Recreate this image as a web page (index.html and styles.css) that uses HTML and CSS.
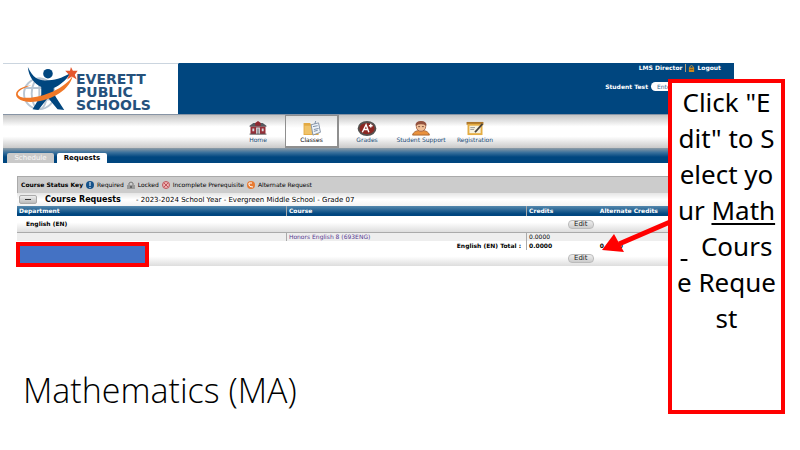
FILE: index.html
```html
<!DOCTYPE html>
<html lang="en">
<head>
<meta charset="utf-8">
<title>Mathematics (MA)</title>
<link rel="stylesheet" href="styles.css">
</head>
<body>
<main class="slide">
  <section class="app">
    <header class="banner">
      <div class="brand">
        <svg class="brand-mark" viewBox="0 0 64 48" aria-hidden="true">
          <g fill="none" stroke="#b9c6d3" stroke-width="2">
            <circle cx="24" cy="29" r="16"/>
            <ellipse cx="24" cy="29" rx="8" ry="16"/>
            <path d="M9 23h28M9 35h30M24 13v32"/>
          </g>
          <circle cx="33" cy="8" r="5" fill="#00467f"/>
          <path d="M12 1C17 12 23 15 30 15C40 15 47 13 57 7C51 16 45 20 39 23L39 29L50 46L43 45L33 33L23 46L17 45L26 30L26 22C18 18 13 11 12 1Z" fill="#00467f"/>
          <path d="M16 20C3 24-2 29 4 32C17 37 50 26 59 10C53 35 12 43 2 34C-5 27 5 21 16 20Z" fill="#f07828"/>
          <path d="M57 1L59 5L64 5L61 9L63 14L58 11L53 14L55 9L51 5L56 5Z" fill="#e4572e"/>
        </svg>
        <div class="brand-name"><span>EVERETT</span><span>PUBLIC</span><span>SCHOOLS</span></div>
      </div>
      <div class="account">
        <div class="account-links">
          <span>LMS Director</span>
          <a class="logout" href="#"><svg class="lock" viewBox="0 0 8 8" aria-hidden="true"><path d="M2 4V2Q4-1 6 2V4" fill="none" stroke="#d99a32"/><path d="M1 3h6v5H1z" fill="#c88820"/><path d="M2 5h4" stroke="#73500f"/></svg>Logout</a>
        </div>
        <div class="student"><label for="student">Student Test</label><input id="student" class="student-box" type="text" value="Enter"></div>
      </div>
    </header>

    <nav class="toolbar">
      <a class="tool" href="#">
        <svg class="tool-icon" viewBox="0 0 20 16" aria-hidden="true"><path d="M1 5L5 2H15L19 5V6H1Z" fill="#555a60"/><path d="M7 2L10 0L13 2V5H7Z" fill="#8f2830"/><path d="M2 6h16v8H2z" fill="#963039"/><path d="M4 8h2v3H4zM14 8h2v3h-2zM8 7h4v7H8z" fill="#d9dde2"/><path d="M10 8v6M1 14h18" stroke="#555" /></svg>
        <span>Home</span>
      </a>
      <a class="tool tool-current" href="#">
        <svg class="tool-icon" viewBox="0 0 20 16" aria-hidden="true"><path d="M1 2h7l1 2h8v11H1z" fill="#e3aa43"/><path d="M2 5h8v9H2z" fill="#f0c369"/><path d="M9 4L17 2L19 12L11 15Z" fill="#eef3f9" stroke="#8392a5"/><path d="M11 6l5-1M12 9l5-1M12 11l4-1M13 3l1-3" stroke="#7589a1"/></svg>
        <span>Classes</span>
      </a>
      <a class="tool" href="#">
        <svg class="tool-icon" viewBox="0 0 20 16" aria-hidden="true"><ellipse cx="10" cy="8" rx="9" ry="7" fill="#8c2722" stroke="#54514f" stroke-width="2"/><path d="M5 12L9 4L12 12M7 9h4M12 5h4M14 3v4" fill="none" stroke="#fff" stroke-width="1.5"/></svg>
        <span>Grades</span>
      </a>
      <a class="tool" href="#">
        <svg class="tool-icon" viewBox="0 0 20 16" aria-hidden="true"><path d="M1 15Q2 10 10 10Q18 10 19 15Z" fill="#e9913d" stroke="#a8622a"/><ellipse cx="10" cy="6" rx="5" ry="5" fill="#f2c199" stroke="#a66a4c"/><path d="M4 5Q4 0 10 0Q16 0 16 5Q10 2 4 5Z" fill="#92513e"/><path d="M7 6h2M11 6h2" stroke="#75493a"/></svg>
        <span>Student Support</span>
      </a>
      <a class="tool" href="#">
        <svg class="tool-icon" viewBox="0 0 20 16" aria-hidden="true"><path d="M1 1h18v3H1z" fill="#ad762a"/><path d="M2 3h16v12H2z" fill="#e5ad42"/><path d="M4 5h12v8H4z" fill="#f7f2df"/><path d="M5 7h5M5 9h4" stroke="#999"/><path d="M10 12L18 3" stroke="#49433c" stroke-width="2"/></svg>
        <span>Registration</span>
      </a>
    </nav>

    <nav class="tabs">
      <a class="tab" href="#">Schedule</a>
      <a class="tab tab-current" href="#">Requests</a>
    </nav>

    <div class="content">
      <div class="status-key">
        <b>Course Status Key</b>
        <svg class="key-icon" viewBox="0 0 8 8" aria-hidden="true"><circle cx="4" cy="4" r="4" fill="#15528b"/><path d="M4 1v4M4 6v1" stroke="#fff"/></svg><span>Required</span>
        <svg class="key-icon" viewBox="0 0 8 8" aria-hidden="true"><path d="M2 4V2Q4 0 6 2V4" fill="none" stroke="#777"/><path d="M0 4h8v4H0z" fill="#999"/><path d="M4 5v2" stroke="#333"/></svg><span>Locked</span>
        <svg class="key-icon" viewBox="0 0 8 8" aria-hidden="true"><circle cx="4" cy="4" r="3.5" fill="#f0b3b3" stroke="#bd555c"/><path d="M2 2l4 4M6 2L2 6" stroke="#bd555c"/></svg><span>Incomplete Prerequisite</span>
        <svg class="key-icon" viewBox="0 0 8 8" aria-hidden="true"><circle cx="4" cy="4" r="4" fill="#e77b32"/><path d="M2 2v2q0 2 4 2M2 2h3" fill="none" stroke="#fff"/></svg><span>Alternate Request</span>
      </div>
      <div class="group-title">
        <button class="collapse" type="button" aria-label="Collapse"></button>
        <h2>Course Requests</h2>
        <span>- 2023-2024 School Year - Evergreen Middle School - Grade 07</span>
      </div>
      <table class="requests">
        <colgroup><col class="col-department"><col class="col-course"><col class="col-credits"><col></colgroup>
        <thead><tr><th>Department</th><th>Course</th><th>Credits</th><th>Alternate Credits</th></tr></thead>
        <tbody>
          <tr class="department-row"><td class="department" colspan="2">English (EN)</td><td class="action"><button class="edit" type="button">Edit</button></td><td></td></tr>
          <tr class="course-row"><td></td><td><a href="#">Honors English 8 (693ENG)</a></td><td>0.0000</td><td></td></tr>
          <tr class="total-row"><td colspan="2">English (EN) Total :</td><td>0.0000</td><td>0.0000</td></tr>
          <tr class="department-row"><td colspan="2"></td><td class="action"><button class="edit" type="button">Edit</button></td><td></td></tr>
        </tbody>
      </table>
      <div class="highlight"></div>
    </div>
  </section>

  <h1>Mathematics (MA)</h1>

  <svg class="arrow" viewBox="0 0 70 34" aria-hidden="true"><path d="M69 3L18 25" stroke="#f00" stroke-width="5"/><path d="M1 31L13 15L23 33Z" fill="#f00"/></svg>
  <aside class="callout">Click "E<br>dit" to S<br>elect yo<br>ur <u>Math</u><br><u>&nbsp;</u>&nbsp; Cours<br>e Reque<br>st</aside>
</main>
</body>
</html>
```
FILE: styles.css
```css
* { box-sizing: border-box; }
body { margin: 0; background: #fff; color: #000; }
a { color: inherit; text-decoration: none; }

.slide { position: relative; min-height: 100vh; padding-top: 63px; }
.app { margin: 0 66px 0 3px; font: 6px/8px "DejaVu Sans", sans-serif; }

.banner { display: flex; background: #00467f; border-bottom: 1px solid #8794a5; }
.brand { display: flex; align-items: center; width: 176px; height: 51px; padding-left: 12px; background: #fff; border-right: 1px solid #00467f; border-top: 1px solid #cbd5df; }
.brand-mark { width: 64px; height: 46px; flex: none; }
.brand-name { display: flex; flex-direction: column; margin-left: -3px; padding-top: 6px; color: #25517c; font: bold 14px/13px "DejaVu Sans", sans-serif; }
.account { flex: 1; display: flex; flex-direction: column; color: #fff; font-weight: bold; }
.account-links { display: flex; justify-content: flex-end; gap: 3px; padding: 1px 13px 0 0; }
.logout { display: flex; align-items: center; gap: 2px; padding-left: 2px; border-left: 1px solid #b59b71; }
.lock { width: 7px; height: 7px; }
.student { display: flex; justify-content: flex-end; align-items: center; gap: 3px; padding-top: 10px; }
.student-box { width: 83px; height: 9px; padding: 0 6px; border: 0; border-radius: 5px; background: #fff; color: #30658f; font: 6px/8px "DejaVu Sans", sans-serif; }

.toolbar { display: flex; height: 33px; padding-left: 228px; background: linear-gradient(#c4c4c4, #fff 35%, #fff 65%, #c9c9c9); }
.tool { display: flex; flex-direction: column; align-items: center; width: 54px; padding-top: 6px; color: #174975; white-space: nowrap; }
.tool-current { margin-right: 1px; border: solid #8f8f8f; border-width: 1px 2px 2px 1px; padding-top: 5px; color: #000; background: linear-gradient(#ddd, #fff 40%); }
.tool-icon { width: 20px; height: 15px; flex: none; }

.tabs { display: flex; align-items: flex-end; gap: 3px; height: 15px; padding-left: 4px; background: linear-gradient(#8f9ca6, #3b719c 30%, #00467f 60%); }
.tab { width: 47px; height: 10px; border-radius: 2px 2px 0 0; background: #c9c9c9; color: #f7f7f7; font-size: 7px; line-height: 10px; text-align: center; }
.tab-current { width: 50px; background: #fff; color: #000; font-weight: bold; }

.content { position: relative; margin: 13px 0 0 14px; }
.status-key { display: flex; align-items: center; gap: 3px; height: 17px; padding-left: 3px; border: solid #aaa; border-width: 1px 0 0 1px; background: #ccc; white-space: nowrap; }
.key-icon { width: 8px; height: 8px; flex: none; }
.group-title { display: flex; align-items: center; height: 13px; padding-left: 2px; background: linear-gradient(#e5e5e5, #fff 50%, #f3f3f3); font-size: 7px; white-space: nowrap; }
.collapse { position: relative; width: 18px; height: 9px; padding: 0; border: 1px solid #aaa; border-radius: 2px; background: linear-gradient(#eee, #bbb); }
.collapse::after { content: ""; position: absolute; inset: 3px 5px; background: #333; }
.group-title h2 { width: 91px; margin: 0 0 0 8px; font-size: 8px; line-height: 10px; }

.requests { width: 100%; table-layout: fixed; border-collapse: separate; border-spacing: 0; text-align: left; }
.col-department { width: 37.5%; }
.col-course { width: 33.5%; }
.col-credits { width: 10%; }
.requests td, .requests th { padding: 0 2px; line-height: 8px; }
.requests th { height: 10px; color: #fff; background: linear-gradient(#5588ad, #00467f 80%); }
.requests th:nth-child(2), .requests th:nth-child(3) { border-left: 1px solid #aaa; }
.department-row td { height: 16px; background: linear-gradient(#fff 40%, #ddd); }
.requests .department { padding-left: 9px; font-weight: bold; }
.requests .action { padding-right: 4px; text-align: right; }
.edit { display: block; width: 26px; height: 9px; margin-left: auto; padding: 0; border: 1px solid #bbb; border-radius: 4px; background: linear-gradient(#eee, #ccc); color: #222; font: 7px/7px "DejaVu Sans", sans-serif; }
.course-row td { height: 9px; border-top: 1px solid #aaa; background: #eee; }
.course-row td:nth-child(2), .course-row td:nth-child(3), .total-row td:nth-child(2) { border-left: 1px solid #aaa; }
.course-row a { color: #573a91; }
.total-row td { height: 9px; font-weight: bold; }
.total-row td:first-child { padding-right: 5px; text-align: right; }
.highlight { position: absolute; left: -1px; bottom: -1px; width: 133px; height: 25px; border: 4px solid #f00; background: #4472c4; }

h1 { margin: 99px 0 0 23px; font: 300 34px/50px "Open Sans", "Noto Sans", sans-serif; }
.arrow { position: absolute; left: 601px; top: 219px; width: 70px; height: 34px; }
.callout { position: absolute; left: 668px; top: 79px; width: 117px; height: 335px; padding-top: 1px; border: 4px solid #f00; background: #fff; font: 26px/36px "Noto Sans", sans-serif; text-align: center; white-space: nowrap; }
.callout u { text-decoration-thickness: 2px; text-underline-offset: 3px; }
```
